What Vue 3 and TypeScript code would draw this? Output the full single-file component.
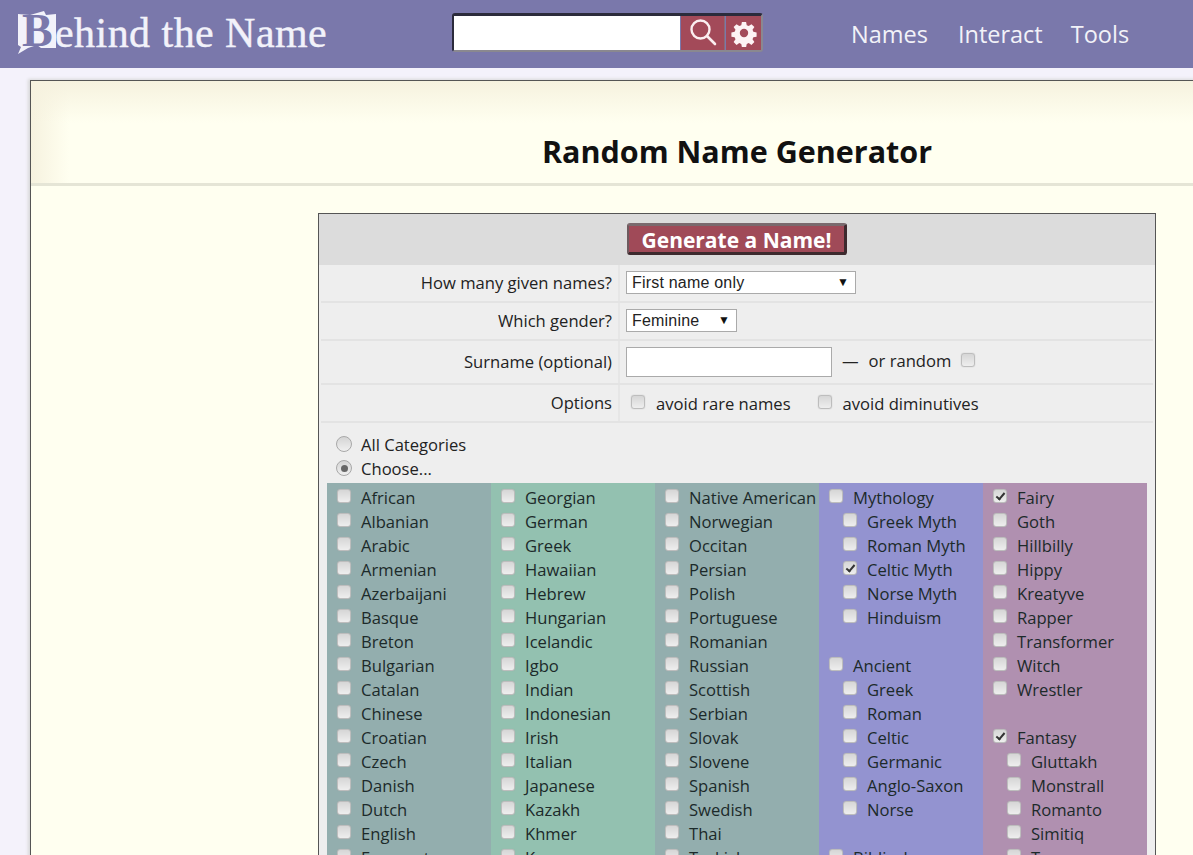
<script setup lang="ts">
interface Item { label: string; checked?: boolean; indent?: boolean }
const col = (s: string): (Item | null)[] =>
  s.split(',').map((t) => {
    if (t === '') return null
    const checked = t.includes('*')
    const indent = t.startsWith('>')
    return { label: t.replace(/[*>]/g, ''), checked, indent }
  })
const columns = [
  { cls: 'teal', items: col('African,Albanian,Arabic,Armenian,Azerbaijani,Basque,Breton,Bulgarian,Catalan,Chinese,Croatian,Czech,Danish,Dutch,English,Esperanto') },
  { cls: 'green', items: col('Georgian,German,Greek,Hawaiian,Hebrew,Hungarian,Icelandic,Igbo,Indian,Indonesian,Irish,Italian,Japanese,Kazakh,Khmer,Korean') },
  { cls: 'teal', items: col('Native American,Norwegian,Occitan,Persian,Polish,Portuguese,Romanian,Russian,Scottish,Serbian,Slovak,Slovene,Spanish,Swedish,Thai,Turkish') },
  { cls: 'blue', items: col('Mythology,>Greek Myth,>Roman Myth,>*Celtic Myth,>Norse Myth,>Hinduism,,Ancient,>Greek,>Roman,>Celtic,>Germanic,>Anglo-Saxon,>Norse,,Biblical') },
  { cls: 'mauve', items: col('*Fairy,Goth,Hillbilly,Hippy,Kreatyve,Rapper,Transformer,Witch,Wrestler,,*Fantasy,>Gluttakh,>Monstrall,>Romanto,>Simitiq,>Tsang') },
]
</script>

<template>
  <div class="page">
    <header class="top">
      <div class="logo">
        <span class="logo-b">
          <svg class="logo-paper" viewBox="0 0 40 44" width="40" height="44" aria-hidden="true">
            <path d="M1 4 L13 5 L27 1 L29 5 L39 4 L39 38 L24 38 L20 35 L11 38 L1 44 L4 37 L1 35 Z" fill="#f2f2fa" />
          </svg>
          <span class="logo-cap">B</span>
        </span>
        <span class="logo-text">ehind the Name</span>
      </div>
      <div class="search">
        <input class="search-input" type="text" aria-label="Search" />
        <button class="search-btn sb-a" aria-label="Search">
          <svg viewBox="0 0 30 30" width="30" height="30" fill="none" stroke="#fbeef0" stroke-width="2.4">
            <circle cx="12.5" cy="11.5" r="9" />
            <path d="M19 18 L27 26" stroke-linecap="round" stroke-width="2.6" />
          </svg>
        </button>
        <button class="search-btn sb-b" aria-label="Settings">
          <svg viewBox="0 0 24 24" width="28" height="28" fill="#fdf3f4">
            <path fill-rule="evenodd" d="M10 1.5h4l.6 3.1 1.9.8 2.6-1.8 2.8 2.8-1.8 2.6.8 1.9 3.1.6v4l-3.1.6-.8 1.9 1.8 2.6-2.8 2.8-2.6-1.8-1.9.8-.6 3.1h-4l-.6-3.1-1.9-.8-2.6 1.8-2.8-2.8 1.8-2.6-.8-1.9-3.1-.6v-4l3.1-.6.8-1.9-1.8-2.6 2.8-2.8 2.6 1.8 1.9-.8zM12 8a4 4 0 1 0 0 8 4 4 0 0 0 0-8z" transform="translate(1.2 1.2) scale(.9)" />
          </svg>
        </button>
      </div>
      <nav class="nav">
        <a>Names</a>
        <a>Interact</a>
        <a>Tools</a>
      </nav>
    </header>

    <main class="sheet">
      <div class="title-bar"><h1>Random Name Generator</h1></div>
      <div class="form-wrap">
        <form class="box" @submit.prevent>
          <div class="box-head"><button class="go">Generate a Name!</button></div>

          <div class="row r1">
            <div class="lab">How many given names?</div>
            <div class="val">
              <span class="sel sel-wide">First name only<i class="arrow">▼</i></span>
            </div>
          </div>
          <div class="row r2">
            <div class="lab">Which gender?</div>
            <div class="val">
              <span class="sel sel-small">Feminine<i class="arrow">▼</i></span>
            </div>
          </div>
          <div class="row r3">
            <div class="lab">Surname (optional)</div>
            <div class="val">
              <input class="surname" type="text" aria-label="Surname" />
              <span class="lift">—</span>
              <span class="lift">or random</span>
              <input class="cb cb-up" type="checkbox" aria-label="or random" />
            </div>
          </div>
          <div class="row r4">
            <div class="lab">Options</div>
            <div class="val opts">
              <label class="opt"><input class="cb" type="checkbox" />avoid rare names</label>
              <label class="opt"><input class="cb" type="checkbox" />avoid diminutives</label>
            </div>
          </div>

          <div class="cats">
            <label class="radio-line"><span class="radio"></span>All Categories</label>
            <label class="radio-line"><span class="radio on"></span>Choose...</label>
          </div>

          <div class="grid">
            <div v-for="(c, i) in columns" :key="i" class="column" :class="c.cls">
              <template v-for="(it, j) in c.items" :key="j">
                <div v-if="it" class="item" :class="{ indent: it.indent }">
                  <input class="cb" type="checkbox" :checked="it.checked" :aria-label="it.label" />
                  <span>{{ it.label }}</span>
                </div>
                <div v-else class="item"></div>
              </template>
            </div>
          </div>
        </form>
      </div>
    </main>
  </div>
</template>

<style>
html, body { margin: 0; background: #f4f2fb; overflow: hidden; }
</style>

<style scoped>
.page {
  width: 1193px;
  height: 855px;
  overflow: hidden;
  font-family: "Open Sans", "Noto Sans", sans-serif;
  font-size: 16.6px;
  color: #222;
  background: #f4f2fb;
}
.top {
  height: 68px;
  background: #7a78ab;
  display: flex;
  align-items: flex-start;
}
.logo {
  width: 452px;
  padding-left: 17px;
  box-sizing: border-box;
  display: flex;
  align-items: center;
  height: 68px;
  color: #f2f2fa;
  font-family: "Liberation Serif", serif;
}
.logo-b { position: relative; width: 40px; height: 44px; display: block; margin-top: -4px; flex: none; }
.logo-paper { display: block; }
.logo-cap {
  position: absolute;
  left: 5px;
  top: -2px;
  font-size: 46px;
  line-height: 46px;
  font-weight: bold;
  color: #7a78ab;
}
.logo-text {
  font-size: 42px;
  letter-spacing: .45px;
  margin-top: -3px;
  margin-left: -2px;
  white-space: nowrap;
  -webkit-text-stroke: .4px #f2f2fa;
}
.search {
  margin-top: 13px;
  width: 311px;
  height: 39px;
  display: flex;
  box-sizing: border-box;
  border-top: 3px solid #2b2b3b;
  border-left: 2px solid #2b2b3b;
  border-bottom: 2px solid #8a8890;
  border-right: 2px solid #8a8890;
  border-radius: 3px;
}
.search-input {
  width: 227px;
  border: 0;
  padding: 0;
  background: #fff;
  outline: none;
}
.search-btn {
  border: 0;
  padding: 0;
  background: #a34a59;
  display: flex;
  align-items: center;
  justify-content: center;
}
.sb-a { width: 43px; margin-left: 1px; border-right: 1px solid #8d6a76; box-sizing: content-box; }
.sb-b { width: 35px; margin-left: 1px; }
.nav {
  display: flex;
  margin-left: 88px;
  gap: 30px;
  height: 68px;
  align-items: center;
  font-size: 23.5px;
  color: #f2f2f8;
}
.nav a:last-child { margin-left: -2px; }
.sheet {
  margin: 12px 0 0 30px;
  width: 1413px;
  min-height: 800px;
  box-sizing: border-box;
  background: #fffff0;
  border-left: 1px solid #555;
  border-top: 1px solid #555;
  box-shadow: -2px -1px 3px #d8d8d8;
}
.title-bar {
  height: 105px;
  box-sizing: border-box;
  border-bottom: 3px solid #e5e5d6;
  background:
    linear-gradient(to bottom, #f6f2df, rgba(255, 255, 240, 0) 42px),
    linear-gradient(to right, #f6f2df, rgba(255, 255, 240, 0) 38px);
  display: flex;
  justify-content: center;
  padding-top: 49px;
}
h1 {
  margin: 0;
  font-size: 30.5px;
  line-height: 42px;
  font-weight: 700;
  color: #111;
}
.form-wrap { display: flex; justify-content: center; padding-top: 27px; }
.box {
  width: 838px;
  box-sizing: border-box;
  border: 1px solid #555;
  border-bottom: 0;
  background: #eee;
  padding-bottom: 40px;
}
.box-head {
  height: 51px;
  background: #dcdcdc;
  display: flex;
  justify-content: center;
  align-items: center;
}
.go {
  width: 220px;
  height: 32px;
  margin-top: -2px;
  box-sizing: border-box;
  padding: 2px 0 0;
  border: 0;
  border-top: 3px solid #7a6a6e;
  border-left: 2px solid #6d5a5e;
  border-right: 3px solid #3d2a2e;
  border-bottom: 3px solid #3d2a2e;
  border-radius: 3px;
  background: #a04a58;
  color: #fff;
  font: 700 21px/24px "Open Sans", sans-serif;
}
.row {
  display: flex;
  margin: 0 2px;
  border-bottom: 2px solid #e3e3e3;
  box-sizing: border-box;
}
.r1 { height: 38px; }
.r2 { height: 38px; }
.r3 { height: 44px; }
.r4 { height: 38px; }
.lab {
  width: 299px;
  box-sizing: border-box;
  padding-right: 6px;
  border-right: 2px solid #e6e6e6;
  text-align: right;
  line-height: 36px;
}
.r3 .lab { line-height: 42px; }
.val { display: flex; align-items: center; padding-left: 6px; gap: 10px; }
.sel {
  position: relative;
  display: block;
  box-sizing: border-box;
  height: 23px;
  margin-top: -2px;
  padding-left: 5px;
  background: #fff;
  border: 1px solid #aaa;
  font: 16px/21px "Liberation Sans", sans-serif;
  letter-spacing: .2px;
  color: #222;
}
.sel-wide { width: 230px; }
.sel-small { width: 111px; }
.arrow {
  position: absolute;
  right: 6px;
  top: 0;
  font-style: normal;
  font-size: 12px;
  letter-spacing: 0;
  color: #111;
}
.surname {
  width: 206px;
  height: 30px;
  box-sizing: border-box;
  border: 1px solid #aaa;
  background: #fff;
  padding: 0;
  margin: 0;
}
.lift { margin-top: -3px; }
.cb {
  appearance: none;
  -webkit-appearance: none;
  width: 14px;
  height: 14px;
  margin: 0;
  flex: none;
  box-sizing: border-box;
  border: 1px solid #bdbdbd;
  border-radius: 3px;
  background: linear-gradient(#d6d6d6, #eeeeee);
  box-shadow: 0 0 1px #a8a8a8;
  position: relative;
}
.cb:checked::after {
  content: "";
  position: absolute;
  left: 3.5px;
  top: 0.5px;
  width: 3px;
  height: 7px;
  border: solid #333;
  border-width: 0 2px 2px 0;
  transform: rotate(40deg);
}
.cb-up { margin-top: -4px; }
.opts { gap: 27px; }
.opt { display: flex; align-items: center; gap: 11px; }
.opt .cb { margin: -3px 0 0 0; }
.opt:first-child .cb { margin-left: 5px; }
.cats { padding: 9px 0 3px 17px; height: 48px; }
.radio-line { display: flex; align-items: center; height: 24px; gap: 9px; }
.radio {
  width: 16px;
  height: 16px;
  box-sizing: border-box;
  border: 1px solid #a8a8a8;
  border-radius: 50%;
  background: linear-gradient(#d4d4d4, #f0f0f0);
  position: relative;
}
.radio.on::after {
  content: "";
  position: absolute;
  left: 3.5px;
  top: 3.5px;
  width: 7px;
  height: 7px;
  border-radius: 50%;
  background: #666;
}
.grid {
  margin: 0 8px;
  display: grid;
  grid-template-columns: repeat(5, 164px);
  color: #1c2a2a;
}
.column { padding-top: 2px; }
.teal { background: #93aeae; }
.green { background: #93c1b0; }
.blue { background: #9393d0; }
.mauve { background: #b090b0; }
.item {
  display: flex;
  align-items: center;
  height: 24px;
  padding-left: 10px;
  gap: 10px;
  white-space: nowrap;
}
.item .cb { margin-top: -2px; }
.indent { padding-left: 24px; }
</style>
